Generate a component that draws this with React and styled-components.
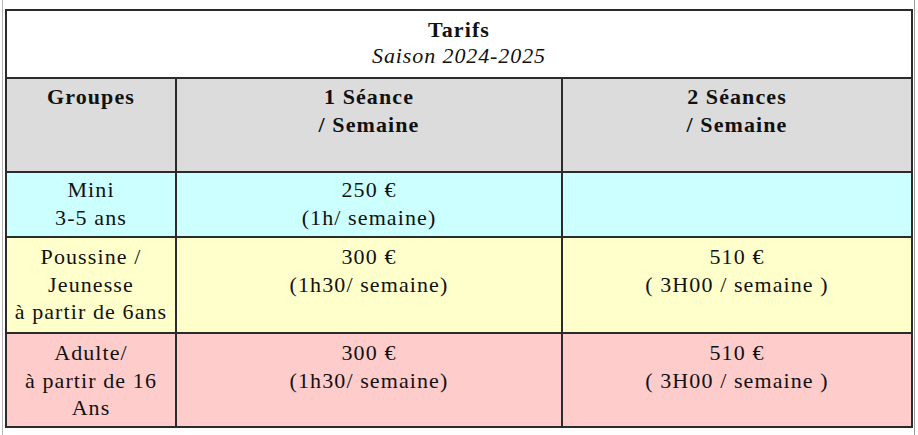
import React from "react";
import styled, { createGlobalStyle } from "styled-components";

const GlobalStyle = createGlobalStyle`
  html, body {
    margin: 0;
    padding: 0;
    background: #ffffff;
  }
  body {
    font-family: "Liberation Serif", "Times New Roman", serif;
    color: #111111;
  }
`;

const Page = styled.div`
  box-sizing: border-box;
  height: 435px;
  width: 913px;
  margin-left: 2px;
  padding: 9px 0 0 2px;
  border-left: 1px solid #b4b4b4;
  border-right: 1px solid #9a9a9a;
`;

const Grid = styled.div`
  box-sizing: border-box;
  width: 908px;
  height: 419px;
  padding: 2px;
  display: grid;
  grid-template-columns: 168px 384px 348px;
  grid-template-rows: 66px 92px 63px 94px 92px;
  gap: 2px;
  background: #2b2b2b;
  font-family: "Liberation Serif", "Times New Roman", serif;
`;

const Cell = styled.div`
  box-sizing: border-box;
  background: ${(p) => p.$bg || "#ffffff"};
  grid-column: ${(p) => (p.$span ? `span ${p.$span}` : "auto")};
  padding-top: ${(p) => p.$pt || 5}px;
  text-align: center;
  font-size: 22px;
  letter-spacing: 1.1px;
  line-height: ${(p) => p.$lh || 27.5}px;
  font-weight: ${(p) => (p.$bold ? 700 : 400)};
`;

const Title = styled.div`
  font-weight: 700;
`;

const Subtitle = styled.div`
  font-style: italic;
  letter-spacing: 0.9px;
`;

const Line = styled.div``;

const colors = {
  head: "#dcdcdc",
  mini: "#ccffff",
  young: "#ffffcc",
  adult: "#ffcccc",
};

const rows = [
  {
    bg: colors.mini,
    pt: 3,
    group: ["Mini", "3-5 ans"],
    one: ["250 €", "(1h/ semaine)"],
    two: [],
  },
  {
    bg: colors.young,
    pt: 5,
    group: ["Poussine /", "Jeunesse", "à partir de 6ans"],
    one: ["300 €", "(1h30/ semaine)"],
    two: ["510 €", "( 3H00 / semaine )"],
  },
  {
    bg: colors.adult,
    pt: 5,
    group: ["Adulte/", "à partir de 16", "Ans"],
    one: ["300 €", "(1h30/ semaine)"],
    two: ["510 €", "( 3H00 / semaine )"],
  },
];

function Lines({ items }) {
  return items.map((text, i) => <Line key={i}>{text}</Line>);
}

export default function App() {
  return (
    <React.Fragment>
      <GlobalStyle />
      <Page>
        <Grid>
          <Cell $span={3} $pt={6} $lh={26}>
            <Title>Tarifs</Title>
            <Subtitle>Saison 2024-2025</Subtitle>
          </Cell>

          <Cell $bg={colors.head} $bold $pt={4} $lh={28}>
            <Line>Groupes</Line>
          </Cell>
          <Cell $bg={colors.head} $bold $pt={4} $lh={28}>
            <Lines items={["1 Séance", "/ Semaine"]} />
          </Cell>
          <Cell $bg={colors.head} $bold $pt={4} $lh={28}>
            <Lines items={["2 Séances", "/ Semaine"]} />
          </Cell>

          {rows.map((row, ind) => (
            <React.Fragment key={ind}>
              <Cell $bg={row.bg} $pt={row.pt}>
                <Lines items={row.group} />
              </Cell>
              <Cell $bg={row.bg} $pt={row.pt}>
                <Lines items={row.one} />
              </Cell>
              <Cell $bg={row.bg} $pt={row.pt}>
                <Lines items={row.two} />
              </Cell>
            </React.Fragment>
          ))}
        </Grid>
      </Page>
    </React.Fragment>
  );
}
